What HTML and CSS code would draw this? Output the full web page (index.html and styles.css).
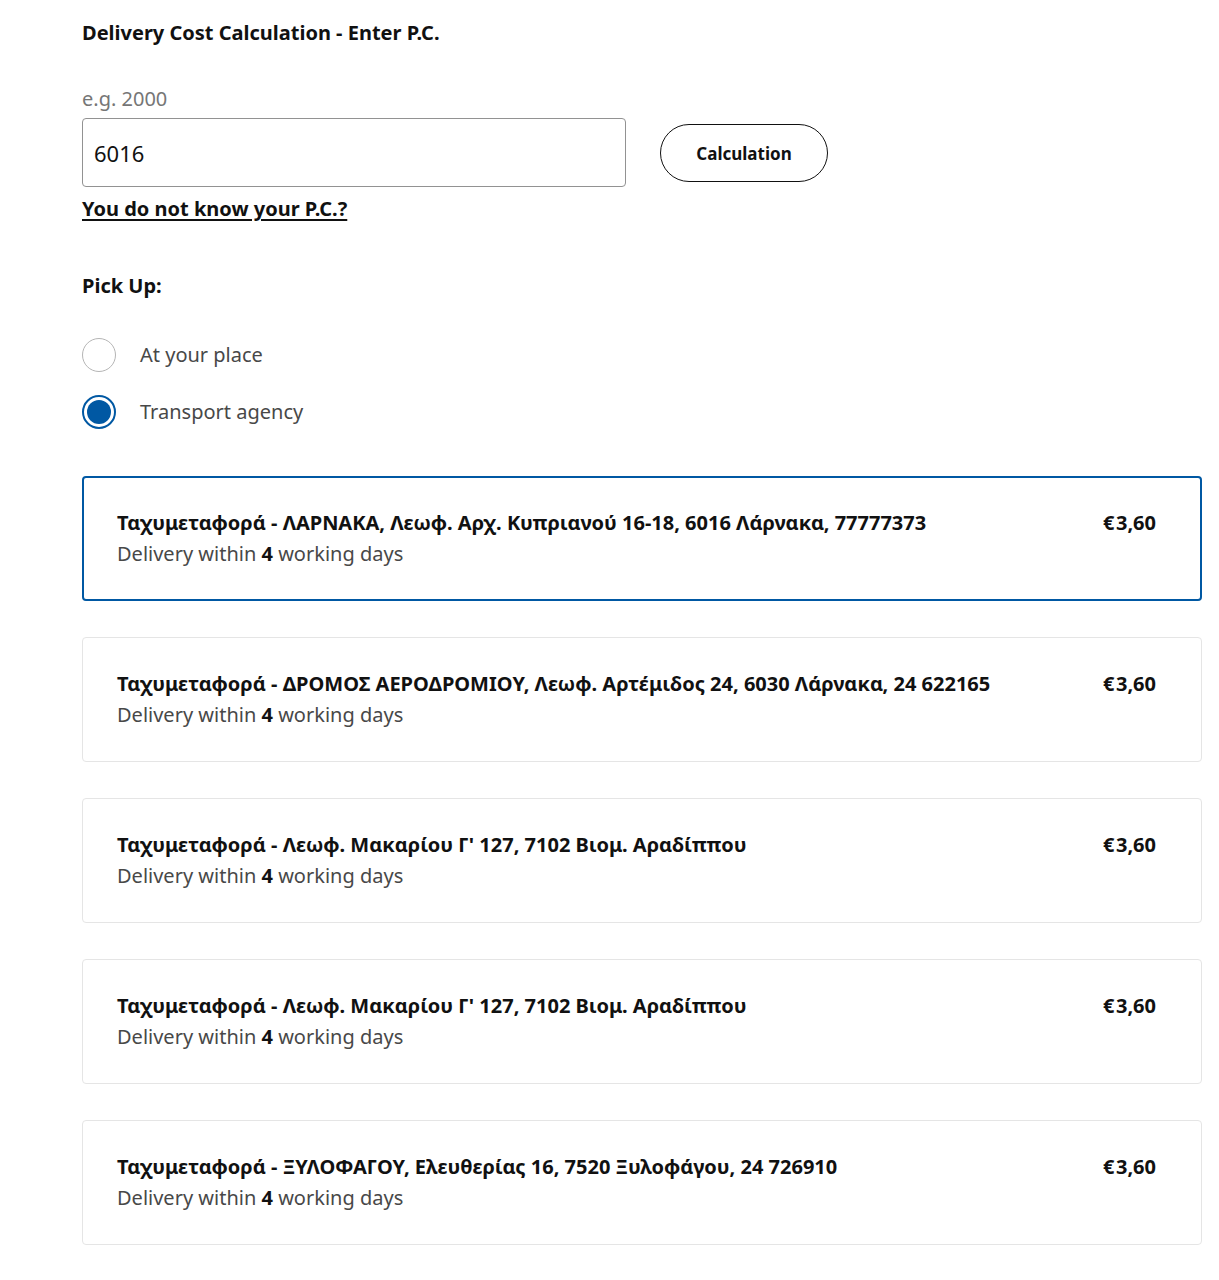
FILE: index.html
```html
<!DOCTYPE html>
<html lang="en">
<head>
<meta charset="utf-8">
<title>Delivery Cost Calculation</title>
<link rel="stylesheet" href="styles.css">
</head>
<body>
<main class="page">
  <h2 class="title">Delivery Cost Calculation - Enter P.C.</h2>

  <div class="pc-row">
    <div class="pc-field">
      <label class="pc-label" for="pc">e.g. 2000</label>
      <input class="pc-input" id="pc" type="text" value="6016">
      <a class="pc-link" href="#">You do not know your P.C.?</a>
    </div>
    <button class="calc-btn" type="button">Calculation</button>
  </div>

  <h3 class="pickup-title">Pick Up:</h3>

  <div class="radios">
    <label class="radio">
      <span class="radio-circle"></span>
      <span class="radio-text">At your place</span>
    </label>
    <label class="radio">
      <span class="radio-circle checked"></span>
      <span class="radio-text">Transport agency</span>
    </label>
  </div>

  <div class="cards">
    <div class="card selected">
      <div class="card-info">
        <div class="card-title">Ταχυμεταφορά - ΛΑΡΝΑΚΑ, Λεωφ. Αρχ. Κυπριανού 16-18, 6016 Λάρνακα, 77777373</div>
        <div class="card-sub">Delivery within <b>4</b> working days</div>
      </div>
      <div class="card-price">€<span class="thin"> </span>3,60</div>
    </div>
    <div class="card">
      <div class="card-info">
        <div class="card-title">Ταχυμεταφορά - ΔΡΟΜΟΣ ΑΕΡΟΔΡΟΜΙΟΥ, Λεωφ. Αρτέμιδος 24, 6030 Λάρνακα, 24 622165</div>
        <div class="card-sub">Delivery within <b>4</b> working days</div>
      </div>
      <div class="card-price">€<span class="thin"> </span>3,60</div>
    </div>
    <div class="card">
      <div class="card-info">
        <div class="card-title">Ταχυμεταφορά - Λεωφ. Μακαρίου Γ' 127, 7102 Βιομ. Αραδίππου</div>
        <div class="card-sub">Delivery within <b>4</b> working days</div>
      </div>
      <div class="card-price">€<span class="thin"> </span>3,60</div>
    </div>
    <div class="card">
      <div class="card-info">
        <div class="card-title">Ταχυμεταφορά - Λεωφ. Μακαρίου Γ' 127, 7102 Βιομ. Αραδίππου</div>
        <div class="card-sub">Delivery within <b>4</b> working days</div>
      </div>
      <div class="card-price">€<span class="thin"> </span>3,60</div>
    </div>
    <div class="card">
      <div class="card-info">
        <div class="card-title">Ταχυμεταφορά - ΞΥΛΟΦΑΓΟΥ, Ελευθερίας 16, 7520 Ξυλοφάγου, 24 726910</div>
        <div class="card-sub">Delivery within <b>4</b> working days</div>
      </div>
      <div class="card-price">€<span class="thin"> </span>3,60</div>
    </div>
  </div>
</main>
</body>
</html>
```

FILE: styles.css
```css
* { box-sizing: border-box; }
html, body { margin: 0; padding: 0; background: #fff; }
body {
  font-family: "Noto Sans", "Open Sans", sans-serif;
  color: #111;
}
.page {
  padding: 18px 17px 0 82px;
}
.title {
  margin: 0;
  font-size: 20px;
  font-weight: 700;
  line-height: 30px;
  color: #111;
}
.pc-row {
  display: flex;
  align-items: flex-start;
  gap: 34px;
  margin-top: 38px;
}
.pc-field {
  display: flex;
  flex-direction: column;
}
.pc-label {
  font-size: 20px;
  line-height: 26px;
  color: #767676;
  margin-bottom: 6px;
}
.pc-input {
  width: 544px;
  height: 69px;
  border: 1px solid #929292;
  border-radius: 4px;
  padding: 0 11px;
  font-family: inherit;
  font-size: 22px;
  color: #111;
  outline: none;
}
.pc-link {
  margin-top: 7px;
  font-size: 20px;
  font-weight: 700;
  line-height: 30px;
  color: #111;
  text-decoration: underline;
  text-underline-offset: 3px;
  align-self: flex-start;
}
.calc-btn {
  margin-top: 38px;
  width: 168px;
  height: 58px;
  border: 1px solid #111;
  border-radius: 29px;
  background: #fff;
  font-family: inherit;
  font-size: 17px;
  font-weight: 700;
  color: #111;
}
.pickup-title {
  margin: 47px 0 0;
  font-size: 20px;
  font-weight: 700;
  line-height: 30px;
}
.radios {
  display: flex;
  flex-direction: column;
  gap: 23px;
  margin-top: 37px;
}
.radio {
  display: flex;
  align-items: center;
  gap: 24px;
}
.radio-circle {
  width: 34px;
  height: 34px;
  border-radius: 50%;
  border: 1px solid #b5b5b5;
  flex: none;
  position: relative;
}
.radio-circle.checked {
  border: 2px solid #0058a3;
}
.radio-circle.checked::after {
  content: "";
  position: absolute;
  left: 3px;
  top: 3px;
  width: 24px;
  height: 24px;
  border-radius: 50%;
  background: #0058a3;
}
.radio-text {
  font-size: 20px;
  line-height: 28px;
  color: #484848;
}
.cards {
  display: flex;
  flex-direction: column;
  gap: 36px;
  margin-top: 47px;
}
.card {
  display: flex;
  justify-content: space-between;
  align-items: flex-start;
  height: 125px;
  border: 1px solid #e5e5e5;
  border-radius: 4px;
  padding: 31px 45px 0 34px;
}
.card.selected {
  border: 2px solid #0058a3;
  padding: 30px 44px 0 33px;
}
.card-title {
  font-size: 20px;
  font-weight: 700;
  line-height: 30px;
  color: #111;
}
.card-sub {
  font-size: 20px;
  line-height: 32px;
  color: #484848;
}
.card-sub b { color: #111; font-weight: 700; }
.card-price {
  font-size: 20px;
  font-weight: 700;
  line-height: 30px;
  color: #111;
  white-space: nowrap;
}
.thin { font-size: 6px; }
```
